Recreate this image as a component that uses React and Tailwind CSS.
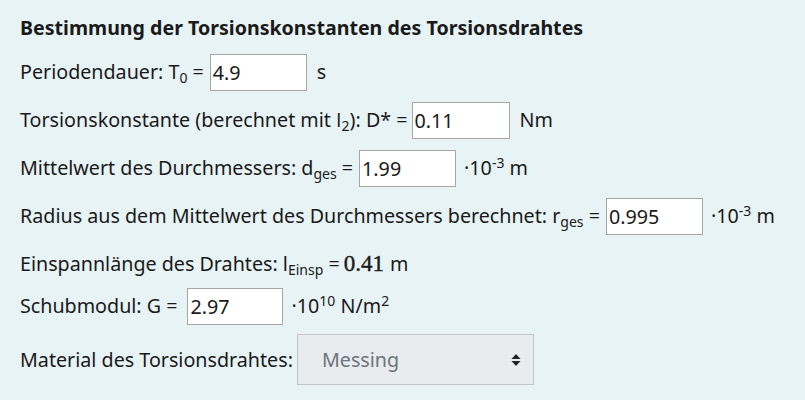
import React from 'react';

const Sub = ({ children }) => (
    <sub className="text-[14px]">{children}</sub>
);
const Sup = ({ children }) => (
    <sup className="text-[14px]">{children}</sup>
);

const Field = ({ value, w = "w-[97px]" }) => (
    <input
        readOnly
        value={value}
        className={`${w} h-[37px] border border-[#a6a6a6] bg-white px-[2px] text-[19.7px] text-[#1a1a1a] outline-none`}
    />
);

const Row = ({ h = "h-12", children }) => (
    <div className={`${h} flex items-center whitespace-nowrap`}>{children}</div>
);

export default function App() {
    return (
        <div className="w-[805px] h-[400px] bg-[#e8f3f6] px-5 pt-2 text-[19.7px] text-[#1a1a1a] font-['Noto_Sans','Open_Sans',sans-serif] overflow-hidden">
            <div className="h-10 flex items-center font-bold text-[19.6px] whitespace-nowrap">
                Bestimmung der Torsionskonstanten des Torsionsdrahtes
            </div>

            <Row>
                <span>Periodendauer: T<Sub>0</Sub> =</span>
                <span className="ml-1.5"><Field value="4.9" /></span>
                <span className="ml-2.5">s</span>
            </Row>

            <Row>
                <span>Torsionskonstante (berechnet mit <span className="font-['Open_Sans',sans-serif]">I</span><Sub>2</Sub>): D* =</span>
                <span className="ml-1"><Field value="0.11" w="w-[98px]" /></span>
                <span className="ml-2.5">Nm</span>
            </Row>

            <Row>
                <span>Mittelwert des Durchmessers: d<Sub>ges</Sub> =</span>
                <span className="ml-1.5"><Field value="1.99" /></span>
                <span className="ml-2">·10<Sup>-3</Sup> m</span>
            </Row>

            <Row>
                <span>Radius aus dem Mittelwert des Durchmessers berechnet: r<Sub>ges</Sub> =</span>
                <span className="ml-1.5"><Field value="0.995" /></span>
                <span className="ml-2">·10<Sup>-3</Sup> m</span>
            </Row>

            <Row>
                <span>Einspannlänge des Drahtes: l<Sub>Einsp</Sub> = </span>
                <span className="ml-1 font-['Liberation_Serif',serif] text-[23px] [-webkit-text-stroke:0.4px_#1a1a1a]">0.41</span>
                <span className="ml-1.5">m</span>
            </Row>

            <Row h="h-[36px]">
                <span>Schubmodul: G =</span>
                <span className="ml-2.5"><Field value="2.97" w="w-[96px]" /></span>
                <span className="ml-2">·10<Sup>10</Sup> N/m<Sup>2</Sup></span>
            </Row>

            <div className="mt-[10px] flex items-center whitespace-nowrap">
                <span>Material des Torsionsdrahtes:</span>
                <div className="ml-1 w-[237px] h-[51px] border border-[#c3c7cb] bg-[#e9ecef] flex items-center justify-between pl-6 pr-3 text-[#6c757d]">
                    <span>Messing</span>
                    <svg width="10" height="14" viewBox="0 0 10 14" className="text-[#222]">
                        <path d="M5 1 L9.5 6 H0.5 Z" fill="currentColor" />
                        <path d="M5 13 L9.5 8 H0.5 Z" fill="currentColor" />
                    </svg>
                </div>
            </div>
        </div>
    );
}
